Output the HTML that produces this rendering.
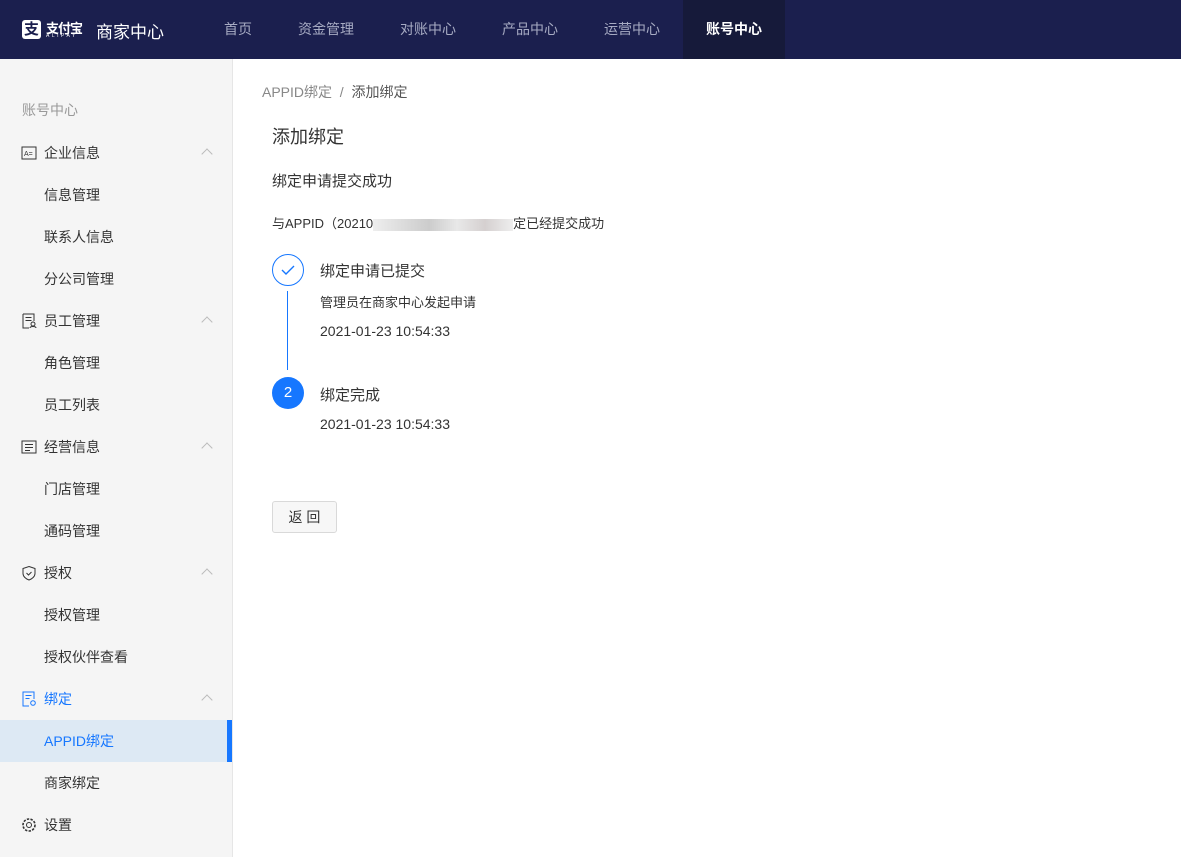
<!DOCTYPE html><html><head><meta charset="utf-8"><style>
*{margin:0;padding:0;box-sizing:border-box}
body{width:1181px;height:857px;overflow:hidden;font-family:"Liberation Sans","Noto Sans CJK SC",sans-serif;background:#fff;color:#333;position:relative}
.hd{position:absolute;left:0;top:0;width:1181px;height:59px;background:#1b1f4e}
.logo{position:absolute;left:22px;top:20px;width:19px;height:19px;background:#fff;border-radius:3px;color:#1b1f4e;font-size:15px;line-height:19px;text-align:center;font-weight:bold}
.lt{position:absolute;left:46px;top:18px;color:#fff;font-size:13px;font-weight:bold;letter-spacing:-1px}
.ls{position:absolute;left:46px;top:33px;color:#fff;font-size:5px;letter-spacing:2.5px}
.mc{position:absolute;left:96px;top:18px;color:#fff;font-size:17px}
.nav{position:absolute;top:0;height:59px;line-height:58px;font-size:14px;color:#a7abc3;text-align:center}
.nav.a{background:#161a3a;color:#fff;font-weight:bold}
.sb{position:absolute;left:0;top:59px;width:233px;height:798px;background:#f5f5f5;border-right:1px solid #e6e6e6}
.it{position:absolute;left:0;width:232px;height:42px;line-height:42px;font-size:14px;color:#333}
.it.s{padding-left:44px}
.it.g{padding-left:44px}
.ic{position:absolute;left:21px;top:13px;width:16px;height:16px}
.ar{position:absolute;left:203px;top:18px;width:8px;height:8px;border-left:1px solid #bbb;border-top:1px solid #bbb;transform:rotate(45deg)}
.act{background:#dde9f4;color:#1677ff}
.act:after{content:"";position:absolute;right:0;top:0;width:5px;height:42px;background:#1677ff}
.t{position:absolute;white-space:nowrap}
</style></head><body>
<div class="hd">
<div class="logo">支</div><div class="lt">支付宝</div><div class="ls">ALIPAY</div>
<div class="mc">商家中心</div>
<div class="nav" style="left:204px;width:68px">首页</div>
<div class="nav" style="left:284px;width:84px">资金管理</div>
<div class="nav" style="left:386px;width:84px">对账中心</div>
<div class="nav" style="left:488px;width:84px">产品中心</div>
<div class="nav" style="left:590px;width:84px">运营中心</div>
<div class="nav a" style="left:683px;width:102px">账号中心</div>
</div>
<div class="sb">
<div class="t" style="left:22px;top:41px;font-size:14px;color:#999">账号中心</div>
<div class="it g" style="top:73px"><svg class="ic" viewBox="0 0 16 16"><rect x="1" y="2" width="14" height="12" fill="none" stroke="#333"/><text x="3" y="11" font-size="7" fill="#333">A=</text></svg>企业信息<div class="ar"></div></div>
<div class="it s" style="top:115px">信息管理</div>
<div class="it s" style="top:157px">联系人信息</div>
<div class="it s" style="top:199px">分公司管理</div>
<div class="it g" style="top:241px"><svg class="ic" viewBox="0 0 16 16"><path d="M2 1h11v7M2 1v14h6M4.5 4.5h6M4.5 7.5h6" fill="none" stroke="#333"/><circle cx="12" cy="11" r="2" fill="none" stroke="#333"/><path d="M9 15c0-2 6-2 6 0" fill="none" stroke="#333"/></svg>员工管理<div class="ar"></div></div>
<div class="it s" style="top:283px">角色管理</div>
<div class="it s" style="top:325px">员工列表</div>
<div class="it g" style="top:367px"><svg class="ic" viewBox="0 0 16 16"><rect x="1" y="2" width="14" height="12" fill="none" stroke="#333"/><path d="M4 5.5h8M4 8.5h8M4 11.5h5" stroke="#333"/></svg>经营信息<div class="ar"></div></div>
<div class="it s" style="top:409px">门店管理</div>
<div class="it s" style="top:451px">通码管理</div>
<div class="it g" style="top:493px"><svg class="ic" viewBox="0 0 16 16"><path d="M8 1.5L14 3.5v5c0 3-3 5.5-6 6.5C5 14 2 11.5 2 8.5v-5z M5.5 8l2 2 3-3" fill="none" stroke="#333"/></svg>授权<div class="ar"></div></div>
<div class="it s" style="top:535px">授权管理</div>
<div class="it s" style="top:577px">授权伙伴查看</div>
<div class="it g" style="top:619px;color:#1677ff"><svg class="ic" viewBox="0 0 16 16"><path d="M8 15H2V1h11v7M4.5 4.5h6M4.5 7.5h4" fill="none" stroke="#1677ff"/><circle cx="12" cy="12" r="2.3" fill="none" stroke="#1677ff"/></svg>绑定<div class="ar"></div></div>
<div class="it s act" style="top:661px">APPID绑定</div>
<div class="it s" style="top:703px">商家绑定</div>
<div class="it g" style="top:745px"><svg class="ic" viewBox="0 0 16 16"><circle cx="8" cy="8" r="2.5" fill="none" stroke="#333"/><circle cx="8" cy="8" r="6" fill="none" stroke="#333" stroke-width="1.6" stroke-dasharray="2.4 1.3"/></svg>设置</div>
</div>
<div class="t" style="left:262px;top:82px;font-size:14px;color:#888">APPID绑定 &nbsp;/&nbsp; <span style="color:#555">添加绑定</span></div>
<div class="t" style="left:272px;top:123px;font-size:18px;color:#333">添加绑定</div>
<div class="t" style="left:272px;top:170px;font-size:15px;color:#333">绑定申请提交成功</div>
<div class="t" style="left:272px;top:213px;font-size:13px;color:#333">与APPID（20210<span style="display:inline-block;width:140px;height:12px;background:linear-gradient(90deg,#eee,#ddd,#ccc,#e8e8e8,#d5d0d0,#eee);vertical-align:middle"></span>定已经提交成功</div>
<div style="position:absolute;left:272px;top:254px;width:32px;height:32px;border:1px solid #1677ff;border-radius:50%"></div>
<svg style="position:absolute;left:280px;top:262px" width="16" height="16" viewBox="0 0 16 16"><path d="M2 8l4 4 8-8" fill="none" stroke="#1677ff" stroke-width="1.4"/></svg>
<div style="position:absolute;left:287px;top:291px;width:0;height:79px;border-left:1px solid #1677ff"></div>
<div style="position:absolute;left:272px;top:377px;width:32px;height:32px;background:#1677ff;border-radius:50%;color:#fff;text-align:center;line-height:32px;font-size:15px">2</div>
<div class="t" style="left:320px;top:260px;font-size:15px">绑定申请已提交</div>
<div class="t" style="left:320px;top:292px;font-size:13px">管理员在商家中心发起申请</div>
<div class="t" style="left:320px;top:323px;font-size:14px">2021-01-23 10:54:33</div>
<div class="t" style="left:320px;top:384px;font-size:15px">绑定完成</div>
<div class="t" style="left:320px;top:416px;font-size:14px">2021-01-23 10:54:33</div>
<div style="position:absolute;left:272px;top:501px;width:65px;height:32px;border:1px solid #d9d9d9;border-radius:3px;background:#f7f7f7;font-size:14px;line-height:30px;text-align:center;color:#333">返 回</div>
</body></html>
